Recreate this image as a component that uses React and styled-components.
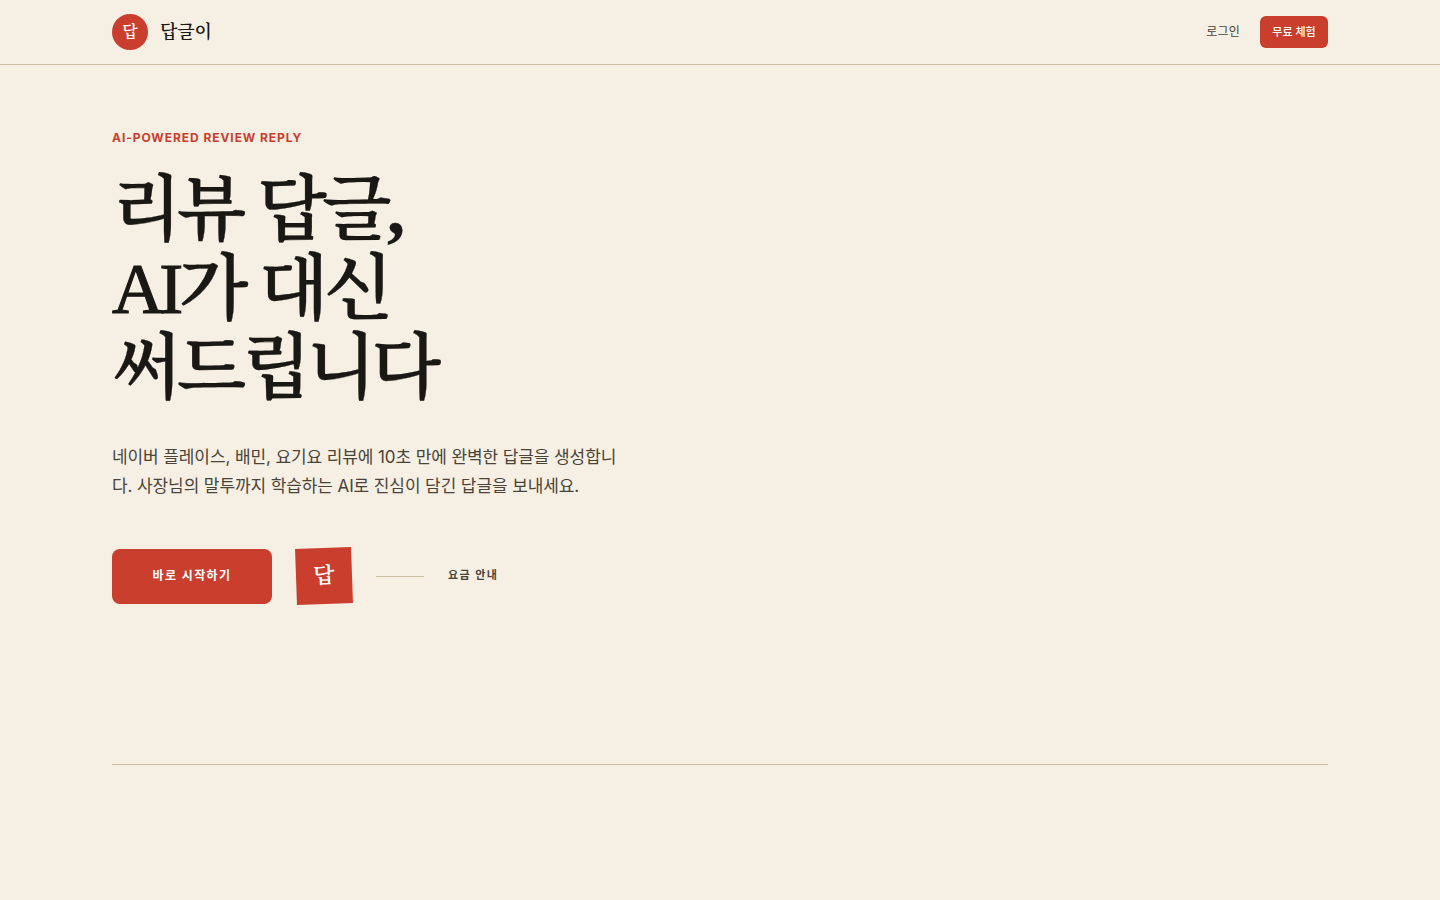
import React from 'react'
import styled, { createGlobalStyle } from 'styled-components'

const Global = createGlobalStyle`
  * { box-sizing: border-box; }
  html, body { margin: 0; padding: 0; background: #f5efe4; }
  body {
    font-family: "Inter", "Noto Sans CJK KR", sans-serif;
    line-height: 1.6;
    color: #1a1814;
  }
`
const serif = `"Liberation Serif", "Noto Serif CJK KR", "Noto Sans CJK KR", serif`
const sans = `"Inter", "Noto Sans CJK KR", sans-serif`

const Page = styled.div`
  min-height: 900px;
  display: flex;
  flex-direction: column;
`
const Nav = styled.nav`
  height: 65px;
  padding: 0 112px;
  display: flex;
  align-items: center;
  justify-content: space-between;
  border-bottom: 1px solid #cbbfa8;
`
const Brand = styled.div`
  display: flex;
  align-items: center;
  gap: 12px;
`
const BrandMark = styled.div`
  width: 36px;
  height: 36px;
  border-radius: 50%;
  background: #c93e2d;
  color: #fff;
  font-family: ${serif};
  font-size: 16px;
  font-weight: 600;
  display: flex;
  align-items: center;
  justify-content: center;
`
const BrandName = styled.span`
  font-family: ${serif};
  font-size: 18px;
  font-weight: 600;
  letter-spacing: -0.01em;
`
const NavRight = styled.div`
  display: flex;
  align-items: center;
  gap: 20px;
`
const NavLink = styled.a`
  font-size: 12px;
  letter-spacing: 0.02em;
  color: #4a4338;
`
const NavButton = styled.button`
  width: 68px;
  height: 32px;
  padding: 1px 0 0;
  border: 0;
  border-radius: 6px;
  background: #c93e2d;
  color: #fff;
  font-family: ${sans};
  font-size: 11px;
  line-height: 1.6;
  font-weight: 500;
`
const Hero = styled.section`
  height: 700px;
  margin: 0 112px;
  padding-top: 64px;
  border-bottom: 1px solid #cbbfa8;
`
const Eyebrow = styled.div`
  font-size: 12px;
  line-height: 17px;
  font-weight: 700;
  letter-spacing: 0.078em;
  color: #c93e2d;
`
const Title = styled.h1`
  margin: 25px 0 0;
  font-family: ${serif};
  font-size: 72px;
  line-height: 1.1;
  font-weight: 600;
  letter-spacing: -0.065em;
  word-spacing: 0.03em;
  -webkit-text-stroke: 0.3px #1a1814;
`
const Latin = styled.span`
  font-weight: 400;
  -webkit-text-stroke: 1.2px #1a1814;
`
const Lead = styled.p`
  margin: 34px 0 0;
  width: 520px;
  font-size: 17px;
  line-height: 29px;
  letter-spacing: -0.006em;
  color: #4a4338;
`
const Actions = styled.div`
  margin-top: 47.6px;
  display: flex;
  align-items: center;
  gap: 24px;
`
const Primary = styled.button`
  width: 160px;
  height: 55px;
  padding: 0 0 1px;
  border: 0;
  border-radius: 8px;
  background: #c93e2d;
  color: #fff;
  font-family: ${sans};
  font-size: 12px;
  line-height: 1.6;
  font-weight: 700;
  letter-spacing: 0.12em;
`
const Stamp = styled.div`
  width: 56px;
  height: 56px;
  background: #c93e2d;
  color: #fff;
  font-family: ${serif};
  font-size: 22px;
  font-weight: 600;
  display: flex;
  align-items: center;
  justify-content: center;
  transform: rotate(-2deg);
`
const Rule = styled.div`
  width: 48px;
  height: 1px;
  background: #cbbfa8;
`
const Secondary = styled.a`
  font-size: 11px;
  font-weight: 600;
  letter-spacing: 0.13em;
  color: #4a4338;
`

export default function App() {
  return (
    <Page>
      <Global />
      <Nav>
        <Brand>
          <BrandMark>답</BrandMark>
          <BrandName>답글이</BrandName>
        </Brand>
        <NavRight>
          <NavLink>로그인</NavLink>
          <NavButton>무료 체험</NavButton>
        </NavRight>
      </Nav>
      <Hero>
        <Eyebrow>AI-POWERED REVIEW REPLY</Eyebrow>
        <Title>리뷰 답글,<br /><Latin>AI</Latin>가 대신<br />써드립니다</Title>
        <Lead>네이버 플레이스, 배민, 요기요 리뷰에 10초 만에 완벽한 답글을 생성합니다. 사장님의 말투까지 학습하는 AI로 진심이 담긴 답글을 보내세요.</Lead>
        <Actions>
          <Primary>바로 시작하기</Primary>
          <Stamp>답</Stamp>
          <Rule />
          <Secondary>요금 안내</Secondary>
        </Actions>
      </Hero>
    </Page>
  )
}
